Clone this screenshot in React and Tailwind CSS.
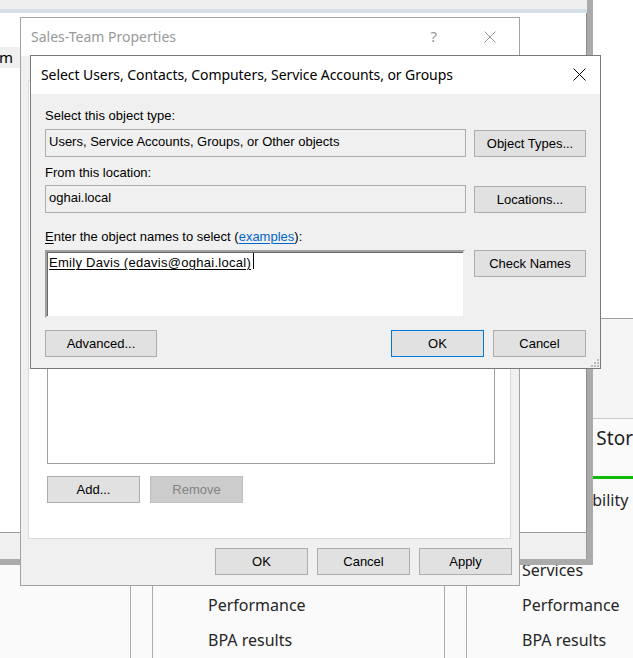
import React from 'react';

const sans = "font-['Liberation_Sans',Arial,sans-serif]";
const segoe = "font-['Noto_Sans','Open_Sans',sans-serif]";

const CloseIcon = ({ color = '#000000', size = 13 }) => (
  <svg width={size} height={size} viewBox={`0 0 ${size} ${size}`} fill="none">
    <path
      d={`M0.5 0.5L${size - 0.5} ${size - 0.5}M${size - 0.5} 0.5L0.5 ${size - 0.5}`}
      stroke={color}
      strokeWidth="1"
    />
  </svg>
);

const Grip = () => (
  <svg width="8" height="8" viewBox="0 0 8 8">
    {[
      [6, 0],
      [6, 3],
      [3, 3],
      [6, 6],
      [3, 6],
      [0, 6],
    ].map(([x, y]) => (
      <rect key={`${x}-${y}`} x={x} y={y} width="2" height="2" fill="#bcbcbc" />
    ))}
  </svg>
);

const Btn = ({ children, className = '', variant = 'normal' }) => {
  const look =
    variant === 'default'
      ? 'border-[#0078d7] bg-[#e1e1e1] text-black'
      : variant === 'disabled'
      ? 'border-[#bfbfbf] bg-[#cccccc] text-[#838383]'
      : 'border-[#adadad] bg-[#e1e1e1] text-black';
  return (
    <div className={`flex h-[27px] shrink-0 items-center justify-center border ${look} ${className}`}>
      {children}
    </div>
  );
};

const TileRow = ({ children }) => (
  <div className={`${segoe} flex h-[35px] items-center whitespace-nowrap text-[16px] text-[#262626]`}>
    {children}
  </div>
);

const rows = ['Manageability', 'Events', 'Services', 'Performance', 'BPA results'];

// rows listed in `covered` sit under the windows, so they are left as blank space
const Tile = ({ title, covered = 0, className = '' }) => (
  <div className={`flex w-[293px] shrink-0 flex-col border-x border-[#ababab] ${className}`}>
    <div className={`${segoe} h-[57px] shrink-0 whitespace-nowrap pl-[55px] pt-[5px] text-[19px] text-[#1e1e1e]`}>
      {title}
    </div>
    <div className="h-[3px] shrink-0 bg-[#10b90a]" />
    <div className="pl-[55px] pt-[3px]">
      {rows.map((r, i) => (i < covered ? <div key={r} className="h-[35px]" /> : <TileRow key={r}>{r}</TileRow>))}
    </div>
  </div>
);

// server manager dashboard sitting behind everything
const ServerManager = () => (
  <div className="absolute inset-0 flex flex-col bg-white">
    <div className="h-[318px] shrink-0 bg-white" />
    <div className="h-[100px] shrink-0 border-t border-[#a0a0a0] bg-[#f5f5f5]" />
    <div className="flex flex-1 gap-[21px] overflow-hidden border-t border-[#c6c6c6] bg-[#fafafa]">
      <div className="w-[131px] shrink-0 border-r border-[#ababab]" />
      <Tile title="" covered={3} />
      <Tile title="File and Storage Services" className="border-r-0" />
    </div>
  </div>
);

const ConsoleWindow = () => (
  <div className="absolute left-0 top-0 h-[565px] w-[593px] bg-[#ababab] pb-[6px] pr-[6px]">
    <div className="flex h-full flex-col bg-white">
      <div className="h-[9px] shrink-0 bg-[#efefef]" />
      <div className="h-[4px] shrink-0 bg-[#d6e0eb]" />
      <div className="flex-1 border-r border-[#8c8c8c] bg-white pt-[34px]">
        <div className="flex h-[21px] w-[20px] items-center overflow-hidden whitespace-nowrap bg-[#efefef]">
          <span className={`${segoe} -ml-px text-[15px] text-black`}>m</span>
        </div>
      </div>
      <div className="h-[27px] shrink-0 border-r border-t border-[#9a9a9a] bg-[#f0f0f0]" />
    </div>
  </div>
);

const PropertiesWindow = () => (
  <div className="absolute left-[20px] top-[17px] flex h-[569px] w-[500px] flex-col border border-[#a3a3a3] bg-[#f0f0f0]">
    <div className="flex h-[38px] shrink-0 items-center bg-white pb-px pl-[10px] pr-[23px]">
      <span className={`${segoe} text-[14px] text-[#999999]`}>Sales-Team Properties</span>
      <span className={`${segoe} ml-auto text-[15px] text-[#999999]`}>?</span>
      <span className="ml-[47px] flex">
        <CloseIcon color="#9a9a9a" size={12} />
      </span>
    </div>
    <div className="flex flex-1 flex-col pb-[10px] pl-[7px] pr-[7px] pt-[24px]">
      <div className="mr-[1px] flex flex-1 flex-col border border-[#d9d9d9] bg-white pb-[35px] pl-[18px] pr-[15px] pt-[40px]">
        <div className="flex-1 border border-[#a0a0a0] bg-white" />
        <div className={`${sans} mt-[12px] flex gap-[9px] text-[13px]`}>
          <Btn className="w-[93px]">Add...</Btn>
          <Btn className="ml-px w-[93px]" variant="disabled">
            Remove
          </Btn>
        </div>
      </div>
      <div className={`${sans} mt-[9px] flex justify-end gap-[9px] text-[13px]`}>
        <Btn className="w-[93px]">OK</Btn>
        <Btn className="w-[93px]">Cancel</Btn>
        <Btn className="w-[93px]">Apply</Btn>
      </div>
    </div>
  </div>
);

const SelectDialog = () => (
  <div className="absolute left-[30px] top-[55px] flex h-[314px] w-[571px] flex-col border border-[#7a7a7a] bg-[#f0f0f0]">
    <div className="flex h-[38px] shrink-0 items-center bg-white pb-px pl-[10px] pr-[14px]">
      <span className={`${segoe} whitespace-nowrap text-[14px] tracking-[-0.07px] text-black`}>
        Select Users, Contacts, Computers, Service Accounts, or Groups
      </span>
      <span className="ml-auto flex">
        <CloseIcon />
      </span>
    </div>
    <div className={`${sans} relative flex flex-1 flex-col px-[14px] pt-[14px] text-[13px] leading-[15px] text-black`}>
      <div>Select this object type:</div>
      <div className="mt-[6px] flex">
        <div className="h-[28px] w-[421px] border border-[#acacac] bg-[#f0f0f0] pl-[3px] pt-[4px]">
          Users, Service Accounts, Groups, or Other objects
        </div>
        <Btn className="ml-auto mt-[1px] w-[112px]">Object Types...</Btn>
      </div>

      <div className="mt-[8px]">From this location:</div>
      <div className="mt-[5px] flex">
        <div className="h-[28px] w-[421px] border border-[#acacac] bg-[#f0f0f0] pl-[3px] pt-[4px]">
          oghai.local
        </div>
        <Btn className="ml-auto mt-[1px] w-[112px]">Locations...</Btn>
      </div>

      <div className="mt-[16px]">
        <span className="underline decoration-1 underline-offset-2">E</span>nter the object names to select (
        <span className="text-[#0066cc] underline decoration-1 underline-offset-2">examples</span>):
      </div>
      <div className="mt-[6px] flex">
        <div className="flex h-[68px] w-[420px] items-start border-2 border-b-[#f0f0f0] border-l-[#a0a0a0] border-r-[#f0f0f0] border-t-[#a0a0a0] bg-white pl-[2px] pt-[3px] shadow-[inset_1px_1px_0_#696969]">
          <span className="whitespace-nowrap tracking-[0.28px] underline decoration-1 underline-offset-[2px]">
            Emily Davis (edavis@oghai.local)
          </span>
          <div className="-mt-[2px] ml-[2px] h-[16px] w-px bg-black" />
        </div>
        <Btn className="ml-auto w-[112px]">Check Names</Btn>
      </div>

      <div className="mt-[12px] flex gap-[9px]">
        <Btn className="w-[112px]">Advanced...</Btn>
        <Btn className="ml-auto w-[93px]" variant="default">
          OK
        </Btn>
        <Btn className="w-[93px]">Cancel</Btn>
      </div>
      <div className="absolute bottom-[1px] right-[1px] flex">
        <Grip />
      </div>
    </div>
  </div>
);

export default function App() {
  return (
    <div className="relative h-[658px] w-[633px] overflow-hidden bg-white">
      <ServerManager />
      <ConsoleWindow />
      <PropertiesWindow />
      <SelectDialog />
    </div>
  );
}
